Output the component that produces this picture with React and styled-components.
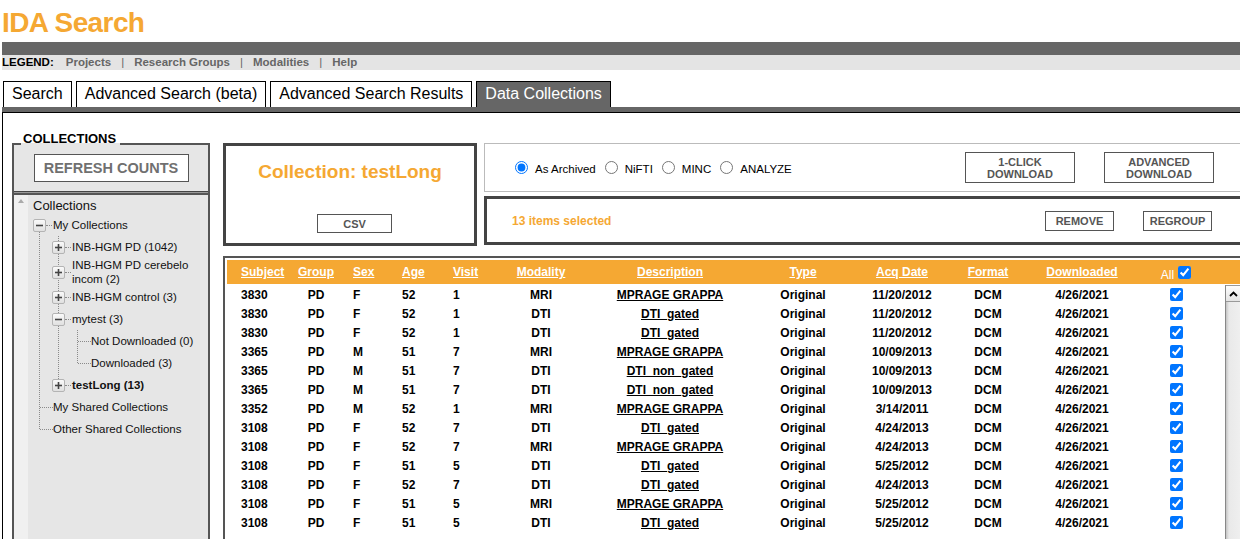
import React from "react";
import styled, { createGlobalStyle } from "styled-components";

const ORANGE = "#f5a833";

const COLS = [
  { key: "subject", label: "Subject", w: 63, align: "left", pad: 14 },
  { key: "group", label: "Group", w: 52, align: "center" },
  { key: "sex", label: "Sex", w: 48, align: "left", pad: 11 },
  { key: "age", label: "Age", w: 50, align: "left", pad: 12 },
  { key: "visit", label: "Visit", w: 50, align: "left", pad: 13 },
  { key: "modality", label: "Modality", w: 102, align: "center" },
  { key: "desc", label: "Description", w: 156, align: "center", link: true },
  { key: "type", label: "Type", w: 110, align: "center" },
  { key: "acq", label: "Acq Date", w: 88, align: "center" },
  { key: "format", label: "Format", w: 84, align: "center" },
  { key: "down", label: "Downloaded", w: 104, align: "center" },
];
const GRID = COLS.map((c) => c.w + "px").join(" ") + " 84px";

const row = (subject, sex, age, visit, modality, desc, acq) => ({
  subject,
  group: "PD",
  sex,
  age,
  visit,
  modality,
  desc,
  type: "Original",
  acq,
  format: "DCM",
  down: "4/26/2021",
});

const ROWS = [
  row("3830", "F", "52", "1", "MRI", "MPRAGE GRAPPA", "11/20/2012"),
  row("3830", "F", "52", "1", "DTI", "DTI_gated", "11/20/2012"),
  row("3830", "F", "52", "1", "DTI", "DTI_gated", "11/20/2012"),
  row("3365", "M", "51", "7", "MRI", "MPRAGE GRAPPA", "10/09/2013"),
  row("3365", "M", "51", "7", "DTI", "DTI_non_gated", "10/09/2013"),
  row("3365", "M", "51", "7", "DTI", "DTI_non_gated", "10/09/2013"),
  row("3352", "M", "52", "1", "MRI", "MPRAGE GRAPPA", "3/14/2011"),
  row("3108", "F", "52", "7", "DTI", "DTI_gated", "4/24/2013"),
  row("3108", "F", "52", "7", "MRI", "MPRAGE GRAPPA", "4/24/2013"),
  row("3108", "F", "51", "5", "DTI", "DTI_gated", "5/25/2012"),
  row("3108", "F", "52", "7", "DTI", "DTI_gated", "4/24/2013"),
  row("3108", "F", "51", "5", "MRI", "MPRAGE GRAPPA", "5/25/2012"),
  row("3108", "F", "51", "5", "DTI", "DTI_gated", "5/25/2012"),
];

const TABS = ["Search", "Advanced Search (beta)", "Advanced Search Results", "Data Collections"];
const LINKS = ["Projects", "Research Groups", "Modalities", "Help"];
const FORMATS = ["As Archived", "NiFTI", "MINC", "ANALYZE"];

const GlobalStyle = createGlobalStyle`
  html, body { margin: 0; padding: 0; background: #fff; overflow: hidden; }
  body { font-family: "Liberation Sans", Arial, sans-serif; color: #000; }
`;

const Page = styled.div`
  width: 1262px;
  padding-left: 2px;
`;

const Title = styled.h1`
  margin: 0;
  padding-top: 3px;
  height: 39px;
  line-height: 39px;
  font-size: 28px;
  letter-spacing: -0.6px;
  font-weight: bold;
  color: ${ORANGE};
`;

const DarkBar = styled.div`
  height: 13px;
  background: #666;
`;

const LegendBar = styled.div`
  height: 15px;
  background: #e4e4e4;
  display: flex;
  align-items: center;
  font-size: 11.5px;
  font-weight: bold;
  line-height: 15px;
`;

const LegendLabel = styled.span`
  color: #000;
  margin-right: 12px;
`;

const LegendLink = styled.a`
  color: #666;
  text-decoration: none;
`;

const Sep = styled.span`
  color: #666;
  font-weight: normal;
  margin: 0 10px;
`;

const TabRow = styled.div`
  display: flex;
  align-items: flex-end;
  gap: 4px;
  margin-top: 11px;
  padding-left: 1px;
`;

const Tab = styled.div`
  height: 26px;
  box-sizing: border-box;
  border: 1px solid #000;
  border-bottom: none;
  padding: 0 8px;
  font-size: 16px;
  line-height: 23px;
  background: ${(p) => (p.$active ? "#666" : "#fff")};
  color: ${(p) => (p.$active ? "#fff" : "#000")};
`;

const TabBar = styled.div`
  height: 5px;
  background: #666;
  border-bottom: 1px solid #000;
`;

const Content = styled.div`
  display: flex;
  align-items: flex-start;
  gap: 13px;
  height: 440px;
  border-left: 1px solid #000;
  padding-left: 9px;
`;

const Fieldset = styled.fieldset`
  margin: 19px 0 0;
  padding: 0;
  width: 198px;
  min-width: 0;
  box-sizing: border-box;
  border: 2px solid #555;
  background: #e6e6e6;
`;

const Legend = styled.legend`
  margin-left: 7px;
  padding: 0 4px 10px 2px;
  font-size: 13px;
  line-height: 13px;
  font-weight: bold;
`;

const FieldBody = styled.div`
  height: 400px;
  display: flex;
  flex-direction: column;
`;

const RefreshButton = styled.button`
  align-self: center;
  width: 155px;
  height: 28px;
  margin: -1px 0 0;
  border: 1px solid #555;
  background: #fff;
  font-family: inherit;
  font-size: 14.5px;
  font-weight: bold;
  color: #707070;
  padding: 0;
`;

const Divider = styled.div`
  margin-top: 9px;
  height: 1px;
  background: #999;
  border-top: 1px solid #444;
  border-bottom: 2px solid #555;
`;

const Tree = styled.div`
  flex: 1;
  display: flex;
`;

const Strip = styled.div`
  width: 14px;
  background: #f0f0f0;
  display: flex;
  justify-content: center;
`;

const UpMark = styled.span`
  margin-top: 4px;
  width: 0;
  height: 0;
  border-left: 3.5px solid transparent;
  border-right: 3.5px solid transparent;
  border-bottom: 4px solid #aaa;
`;

const TreeBody = styled.div`
  flex: 1;
  padding-left: 5px;
  font-size: 11.5px;
  line-height: 14px;
  color: #111;
`;

const RootRow = styled.div`
  padding: 4px 0 1px;
  font-size: 13px;
  line-height: 14px;
`;

const Branch = styled.ul`
  list-style: none;
  margin: 0 0 0 ${(p) => (p.$nested ? 19 : 0)}px;
  padding: 0;
  & > li:first-child {
    background-position: 6px ${(p) => (p.$nested ? 0 : 8)}px;
  }
`;

const Node = styled.li`
  background-image: repeating-linear-gradient(to bottom, #8a8a8a 0 1px, transparent 1px 2px);
  background-repeat: no-repeat;
  background-position: 6px 0;
  background-size: 1px 100%;
  &:last-child {
    background-size: 1px 11px;
  }
`;

const TreeRow = styled.div`
  display: flex;
  align-items: center;
  min-height: 22px;
`;

const Toggle = styled.span`
  flex-shrink: 0;
  width: 13px;
  height: 13px;
  box-sizing: border-box;
  border: 1px solid #b4b4b4;
  border-radius: 2px;
  background: linear-gradient(#fafafa, #e0e0e0);
  display: flex;
  align-items: center;
  justify-content: center;
`;

const Dots = styled.span`
  flex-shrink: 0;
  width: 6px;
  margin-right: 1px;
  border-top: 1px dotted #8a8a8a;
`;

const Stub = styled.span`
  flex-shrink: 0;
  width: 13px;
  margin-left: 7px;
  border-top: 1px dotted #8a8a8a;
`;

const NodeLabel = styled.span`
  font-weight: ${(p) => (p.$bold ? "bold" : "normal")};
`;

const Main = styled.div`
  width: 1027px;
  margin-top: 30px;
`;

const TopRow = styled.div`
  display: flex;
  gap: 7px;
  height: 103px;
`;

const CollectionBox = styled.div`
  width: 254px;
  box-sizing: border-box;
  border: 3px solid #444;
  display: flex;
  flex-direction: column;
  align-items: center;
  padding-top: 15px;
`;

const CollectionTitle = styled.div`
  font-size: 19px;
  line-height: 22px;
  font-weight: bold;
  color: ${ORANGE};
`;

const PlainButton = styled.button`
  width: ${(p) => p.$w}px;
  height: ${(p) => p.$h}px;
  box-sizing: border-box;
  border: 1px solid #555;
  background: #fff;
  padding: 0;
  font-family: inherit;
  font-size: 11px;
  line-height: 12px;
  font-weight: bold;
  color: #555;
`;

const CsvButton = styled(PlainButton)`
  margin: 31px 0 0 9px;
`;

const RightStack = styled.div`
  flex: 1;
  display: flex;
  flex-direction: column;
  gap: 4px;
`;

const RadioBox = styled.div`
  height: 49px;
  box-sizing: border-box;
  border: 1px solid #bbb;
  display: flex;
  align-items: center;
  padding: 0 35px 0 30px;
`;

const Radio = styled.input`
  margin: 0 7px 0 0;
  width: 13px;
  height: 13px;
`;

const RadioLabel = styled.label`
  font-size: 11.5px;
  margin: 3px 9px 0 0;
`;

const ButtonGroup = styled.div`
  margin-left: auto;
  display: flex;
  gap: 29px;
`;

const SelectedBox = styled.div`
  height: 49px;
  box-sizing: border-box;
  border: 3px solid #444;
  display: flex;
  align-items: center;
  padding: 0 35px 0 25px;
`;

const SelectedText = styled.span`
  font-size: 12px;
  font-weight: bold;
  color: ${ORANGE};
`;

const Table = styled.div`
  margin-top: 10px;
  border: 2px solid #555;
  padding: 2px;
`;

const HeadRow = styled.div`
  height: 24px;
  background: ${ORANGE};
  display: grid;
  grid-template-columns: ${GRID};
  align-items: center;
`;

const HeadCell = styled.div`
  color: #fff;
  font-size: 12px;
  font-weight: bold;
  text-decoration: underline;
  text-align: ${(p) => p.$align};
  padding-left: ${(p) => p.$pad || 0}px;
`;

const AllCell = styled.div`
  align-self: stretch;
  display: flex;
  align-items: flex-end;
  justify-content: center;
  padding-bottom: 5px;
  color: #fff;
  font-size: 12px;
`;

const AllText = styled.span`
  line-height: 12px;
  margin-bottom: -2px;
`;

const Check = styled.input`
  margin: 0 0 0 ${(p) => p.$gap || 0}px;
  width: 13px;
  height: 13px;
`;

const Body = styled.div`
  display: flex;
  padding-top: 1px;
  height: 270px;
`;

const Rows = styled.div`
  flex: 1;
`;

const DataRow = styled.div`
  height: 19px;
  display: grid;
  grid-template-columns: ${GRID};
  align-items: center;
  font-size: 12px;
  font-weight: bold;
`;

const Cell = styled.div`
  text-align: ${(p) => p.$align};
  padding-left: ${(p) => p.$pad || 0}px;
  text-decoration: ${(p) => (p.$link ? "underline" : "none")};
  white-space: nowrap;
`;

const CheckCell = styled.div`
  display: flex;
  justify-content: center;
`;

const Scrollbar = styled.div`
  width: 20px;
  border-left: 1px solid #888;
  display: flex;
  flex-direction: column;
`;

const ScrollUp = styled.div`
  height: 17px;
  box-sizing: border-box;
  border: 1px solid #999;
  border-left: none;
  background: linear-gradient(#fdfdfd, #e4e4e4);
  display: flex;
  align-items: center;
  padding-left: 3px;
`;

const Track = styled.div`
  flex: 1;
  background: linear-gradient(to right, #c4c4c4, #e9e9e9 3px, #f2f2f2);
`;

const Sign = ({ plus }) => (
  <svg width="7" height="7" viewBox="0 0 7 7">
    <path d="M0 3.5 H7" stroke="#444" strokeWidth="1.6" />
    {plus && <path d="M3.5 0 V7" stroke="#444" strokeWidth="1.6" />}
  </svg>
);

const Folder = ({ label, open, bold, children }) => (
  <Node>
    <TreeRow>
      <Toggle>
        <Sign plus={!open} />
      </Toggle>
      <Dots />
      <NodeLabel $bold={bold}>{label}</NodeLabel>
    </TreeRow>
    {children}
  </Node>
);

const Leaf = ({ label }) => (
  <Node>
    <TreeRow>
      <Stub />
      <NodeLabel>{label}</NodeLabel>
    </TreeRow>
  </Node>
);

export default function App() {
  return (
    <Page>
      <GlobalStyle />
      <Title>IDA Search</Title>
      <DarkBar />
      <LegendBar>
        <LegendLabel>LEGEND:</LegendLabel>
        {LINKS.map((l, i) => (
          <React.Fragment key={l}>
            {i > 0 && <Sep>|</Sep>}
            <LegendLink>{l}</LegendLink>
          </React.Fragment>
        ))}
      </LegendBar>
      <TabRow>
        {TABS.map((t, i) => (
          <Tab key={t} $active={i === TABS.length - 1}>
            {t}
          </Tab>
        ))}
      </TabRow>
      <TabBar />
      <Content>
        <Fieldset>
          <Legend>COLLECTIONS</Legend>
          <FieldBody>
            <RefreshButton>REFRESH COUNTS</RefreshButton>
            <Divider />
            <Tree>
              <Strip>
                <UpMark />
              </Strip>
              <TreeBody>
                <RootRow>Collections</RootRow>
                <Branch>
                  <Folder label="My Collections" open>
                    <Branch $nested>
                      <Folder label="INB-HGM PD (1042)" />
                      <Folder label="INB-HGM PD cerebelo incom (2)" />
                      <Folder label="INB-HGM control (3)" />
                      <Folder label="mytest (3)" open>
                        <Branch $nested>
                          <Leaf label="Not Downloaded (0)" />
                          <Leaf label="Downloaded (3)" />
                        </Branch>
                      </Folder>
                      <Folder label="testLong (13)" bold />
                    </Branch>
                  </Folder>
                  <Leaf label="My Shared Collections" />
                  <Leaf label="Other Shared Collections" />
                </Branch>
              </TreeBody>
            </Tree>
          </FieldBody>
        </Fieldset>

        <Main>
          <TopRow>
            <CollectionBox>
              <CollectionTitle>Collection: testLong</CollectionTitle>
              <CsvButton $w={75} $h={19}>CSV</CsvButton>
            </CollectionBox>
            <RightStack>
              <RadioBox>
                {FORMATS.map((f, i) => (
                  <React.Fragment key={f}>
                    <Radio type="radio" name="fmt" id={"fmt" + i} defaultChecked={i === 0} />
                    <RadioLabel htmlFor={"fmt" + i}>{f}</RadioLabel>
                  </React.Fragment>
                ))}
                <ButtonGroup>
                  <PlainButton $w={110} $h={31}>
                    1-CLICK
                    <br />
                    DOWNLOAD
                  </PlainButton>
                  <PlainButton $w={110} $h={31}>
                    ADVANCED
                    <br />
                    DOWNLOAD
                  </PlainButton>
                </ButtonGroup>
              </RadioBox>
              <SelectedBox>
                <SelectedText>13 items selected</SelectedText>
                <ButtonGroup>
                  <PlainButton $w={69} $h={20}>REMOVE</PlainButton>
                  <PlainButton $w={69} $h={20}>REGROUP</PlainButton>
                </ButtonGroup>
              </SelectedBox>
            </RightStack>
          </TopRow>

          <Table>
            <HeadRow>
              {COLS.map((c) => (
                <HeadCell key={c.key} $align={c.align} $pad={c.pad}>
                  {c.label}
                </HeadCell>
              ))}
              <AllCell>
                <AllText>All</AllText>
                <Check type="checkbox" defaultChecked $gap={4} />
              </AllCell>
            </HeadRow>
            <Body>
              <Rows>
                {ROWS.map((r, i) => (
                  <DataRow key={i}>
                    {COLS.map((c) => (
                      <Cell key={c.key} $align={c.align} $pad={c.pad} $link={c.link}>
                        {r[c.key]}
                      </Cell>
                    ))}
                    <CheckCell>
                      <Check type="checkbox" defaultChecked />
                    </CheckCell>
                  </DataRow>
                ))}
              </Rows>
              <Scrollbar>
                <ScrollUp>
                  <svg width="9" height="6" viewBox="0 0 9 6">
                    <path d="M1 5 L4.5 1.5 L8 5" fill="none" stroke="#000" strokeWidth="1.8" />
                  </svg>
                </ScrollUp>
                <Track />
              </Scrollbar>
            </Body>
          </Table>
        </Main>
      </Content>
    </Page>
  );
}
